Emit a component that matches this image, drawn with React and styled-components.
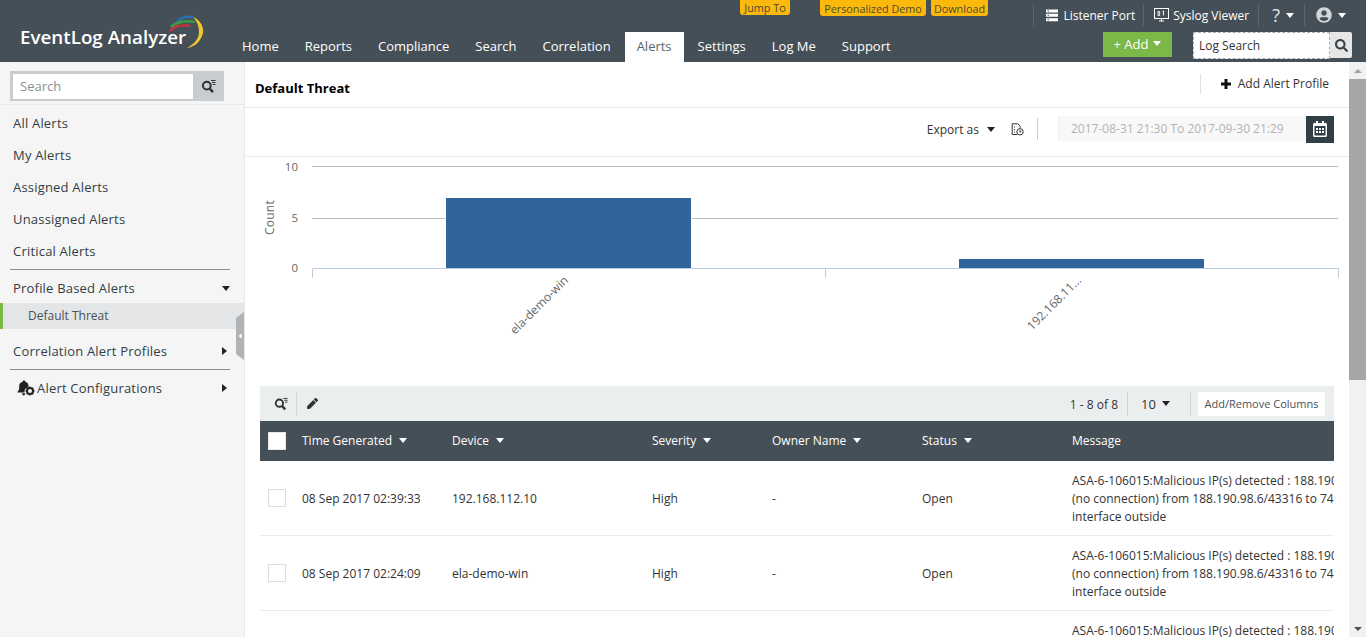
import React from 'react';
import styled, { createGlobalStyle } from 'styled-components';
import { FaSearch, FaPen, FaRegCalendarAlt, FaUserCircle, FaCaretLeft } from 'react-icons/fa';

const GlobalStyle = createGlobalStyle`
  html, body {
    margin: 0;
    height: 100%;
    overflow: hidden;
  }
  body {
    font-family: 'Open Sans', 'Liberation Sans', sans-serif;
    font-size: 12px;
    color: #333;
    background: #fff;
  }
  * {
    box-sizing: border-box;
  }
`;

const Page = styled.div`
  width: 1366px;
  height: 637px;
  display: flex;
  flex-direction: column;
  overflow: hidden;
`;

const Caret = styled.span`
  flex: none;
  width: 0;
  height: 0;
  border-style: solid;
  border-color: transparent;
  ${(p) => p.$right
    ? `margin-right: 3px; border-width: 4.5px 0 4.5px 5px; border-left-color: ${p.$color || 'currentColor'};`
    : `border-width: 5px 4.5px 0 4.5px; border-top-color: ${p.$color || 'currentColor'};`}
`;

const Header = styled.header`
  flex: 0 0 62px;
  display: grid;
  grid-template-columns: 229px 1fr;
  grid-template-rows: 32px 30px;
  background: #454f57;
`;

const Logo = styled.div`
  grid-row: 1 / 3;
  position: relative;
  padding: 24px 0 0 20px;
  color: #fff;
  font-size: 18.8px;
  font-weight: 600;
  line-height: 26px;
  white-space: nowrap;
`;

const LogoArcs = styled.svg`
  position: absolute;
  left: 166px;
  top: 14px;
`;

const TopStrip = styled.div`
  display: flex;
  align-items: flex-start;
  padding-left: 511px;
`;

const Badge = styled.a`
  width: ${(p) => p.$w}px;
  margin-left: ${(p) => p.$gap}px;
  height: ${(p) => p.$short ? 15 : 16}px;
  display: flex;
  align-items: center;
  justify-content: center;
  background: #fdb90b;
  border-radius: 0 0 3px 3px;
  color: #4a4a32;
  font-size: 10.8px;
  white-space: nowrap;
`;

const TopTools = styled.div`
  margin-left: auto;
  height: 24px;
  margin-top: 3px;
  display: flex;
  align-items: center;
  padding-right: 16px;
`;

const TopTool = styled.a`
  height: 22px;
  padding: 0 ${(p) => p.$right}px 0 ${(p) => p.$left}px;
  display: flex;
  align-items: center;
  gap: ${(p) => p.$gap}px;
  border-left: 1px solid #5d666d;
  color: #fff;
  font-size: 12px;
  white-space: nowrap;
`;

const HelpMark = styled.span`
  font-size: 18px;
  line-height: 22px;
  color: #e4e6e7;
`;

const NavRow = styled.div`
  display: flex;
  align-items: stretch;
`;

const NavItem = styled.a`
  padding: 0 ${(p) => p.$active ? 12 : 13}px 2px;
  margin: 0 ${(p) => p.$active ? 1 : 0}px;
  display: flex;
  align-items: center;
  color: ${(p) => p.$active ? '#5c6469' : '#fff'};
  background: ${(p) => p.$active ? '#fff' : 'transparent'};
  font-size: 13px;
  white-space: nowrap;
`;

const NavActions = styled.div`
  margin-left: auto;
  display: flex;
  align-items: flex-start;
  padding-right: 14px;
`;

const AddButton = styled.button`
  width: 69px;
  height: 25px;
  margin-right: 21px;
  padding: 0 0 2px;
  display: flex;
  align-items: center;
  justify-content: center;
  gap: 5px;
  border: none;
  background: #7cb847;
  color: #fff;
  font-family: inherit;
  font-size: 13px;
`;

const LogSearchInput = styled.div`
  width: 137px;
  height: 27px;
  padding-left: 5px;
  display: flex;
  align-items: center;
  background: #fff;
  border: 1px dashed #a9a9a9;
  color: #333;
  font-size: 12px;
`;

const LogSearchButton = styled.button`
  width: 22px;
  height: 26px;
  padding: 0;
  display: flex;
  align-items: center;
  justify-content: center;
  border: none;
  border-radius: 0 2px 2px 0;
  background: #e6e6e6;
  color: #3a4249;
`;

const Body = styled.div`
  flex: 1;
  min-height: 0;
  display: flex;
`;

const Sidebar = styled.aside`
  flex: 0 0 245px;
  position: relative;
  background: #f5f5f5;
  border-right: 1px solid #e6e8e8;
`;

const SideSearchWrap = styled.div`
  height: 43px;
  padding-top: 9px;
  border-bottom: 1px solid #e8eaea;
`;

const SideSearch = styled.div`
  width: 214px;
  height: 30px;
  margin-left: 10px;
  display: flex;
  align-items: center;
  background: #c9cdd0;
`;

const SideSearchField = styled.div`
  width: 180px;
  height: 25px;
  margin-left: 3px;
  padding-left: 7px;
  display: flex;
  align-items: center;
  background: #fff;
  color: #8a8f92;
  font-size: 13px;
`;

const SideSearchIcon = styled.div`
  flex: 1;
  display: flex;
  justify-content: center;
  color: #333;
`;

const SideMenu = styled.nav`
  padding-top: 2px;
`;

const SideItem = styled.a`
  height: 32px;
  padding: 0 14px 0 13px;
  display: flex;
  align-items: center;
  color: #333d45;
  font-size: 13px;
  letter-spacing: 0.2px;
  white-space: nowrap;
`;

const SideSection = styled(SideItem)`
  height: ${(p) => p.$h}px;
  padding-top: ${(p) => p.$top || 0}px;
  padding-bottom: ${(p) => p.$bottom || 0}px;
  justify-content: space-between;
`;

const SideLabel = styled.span`
  display: flex;
  align-items: center;
  gap: 2px;
  padding-left: ${(p) => p.$indent || 0}px;
`;

const SideDivider = styled.div`
  height: 1px;
  margin: ${(p) => p.$top || 0}px 14px 0 10px;
  background: #8c8c8c;
`;

const SideChild = styled.a`
  height: 26px;
  padding: 0 0 2px 25px;
  display: flex;
  align-items: center;
  background: #e3e5e6;
  border-left: 3px solid #7cb847;
  color: #4a5157;
  font-size: 12px;
`;

const Collapser = styled.div`
  position: absolute;
  right: 0;
  top: 250px;
  width: 8px;
  height: 48px;
  display: flex;
  align-items: center;
  justify-content: center;
  background: #aeb3b5;
  color: #fff;
  clip-path: polygon(0 6px, 100% 0, 100% 100%, 0 calc(100% - 6px));
`;

const Main = styled.main`
  flex: 1;
  min-width: 0;
  display: flex;
  flex-direction: column;
  overflow: hidden;
`;

const TitleBar = styled.div`
  flex: 0 0 46px;
  display: flex;
  align-items: center;
  padding: 0 20px 0 10px;
  border-bottom: 1px solid #e8e8e8;
`;

const PageTitle = styled.h1`
  margin: 6px 0 0;
  font-size: 13px;
  font-weight: 700;
  color: #000;
`;

const AddProfile = styled.a`
  margin: 0 0 2px auto;
  height: 20px;
  padding-left: 20px;
  display: flex;
  align-items: center;
  gap: 7px;
  border-left: 1px solid #e2e2e2;
  color: #333;
  font-size: 12px;
`;

const FilterBar = styled.div`
  flex: 0 0 49px;
  display: flex;
  align-items: center;
  justify-content: flex-end;
  padding: 0 15px 6px 0;
  border-bottom: 1px solid #ececec;
`;

const ExportLabel = styled.span`
  display: flex;
  align-items: center;
  gap: 8px;
  color: #333;
  font-size: 12px;
`;

const HistoryIcon = styled.svg`
  margin-left: 16px;
`;

const DateField = styled.div`
  width: 248px;
  height: 25px;
  margin: 0 0 2px 20px;
  padding-left: 12px;
  display: flex;
  align-items: center;
  background: #f8f8f8;
  border-left: 1px solid #f1f1f1;
  color: #b3b3b3;
  font-size: 12px;
`;

const FilterRule = styled.span`
  width: 1px;
  height: 22px;
  margin-left: 13px;
  background: #ccc;
`;

const CalendarButton = styled.button`
  width: 28px;
  height: 27px;
  padding: 0;
  display: flex;
  align-items: center;
  justify-content: center;
  border: none;
  background: #323e46;
  color: #fff;
`;

const ChartWrap = styled.div`
  flex: 0 0 225px;
`;

const TableArea = styled.section`
  padding: 0 15px;
`;

const TableTools = styled.div`
  height: 35px;
  display: flex;
  align-items: center;
  background: #ebeeef;
  color: #333;
`;

const SearchTool = styled.span`
  width: 36px;
  height: 24px;
  padding-right: 8px;
  display: flex;
  align-items: center;
  justify-content: flex-end;
`;

const PenTool = styled.span`
  width: 32px;
  height: 24px;
  display: flex;
  align-items: center;
  justify-content: center;
  border-left: 1px solid #d5d8d9;
`;

const Pager = styled.div`
  margin-left: auto;
  height: 24px;
  display: flex;
  align-items: center;
  padding-right: 9px;
`;

const PageCount = styled.span`
  padding: 2px 9px 0 0;
  font-size: 12px;
  color: #333;
`;

const PageSize = styled.span`
  height: 24px;
  width: 64px;
  padding-left: 13px;
  display: flex;
  align-items: center;
  gap: 6px;
  border-left: 1px solid #d0d3d4;
  border-right: 1px solid #d0d3d4;
  font-size: 13px;
`;

const ColumnsButton = styled.button`
  height: 24px;
  width: 127px;
  margin-left: 7px;
  padding: 0;
  border: none;
  background: #fff;
  color: #4a5157;
  font-family: inherit;
  font-size: 11px;
`;

const Table = styled.div`
  overflow: hidden;
`;

const columns = '42px 150px 200px 120px 150px 150px 262px';

const HeadRow = styled.div`
  height: 40px;
  display: grid;
  grid-template-columns: ${columns};
  align-items: center;
  background: #454f57;
  color: #fff;
  font-size: 12px;
`;

const Row = styled.div`
  height: 75px;
  display: grid;
  grid-template-columns: ${columns};
  align-items: center;
  border-bottom: 1px solid #ececec;
  color: #333;
  font-size: 12px;
`;

const HeadCell = styled.span`
  margin-bottom: 2px;
  display: flex;
  align-items: center;
  gap: 7px;
`;

const CheckBox = styled.span`
  width: 18px;
  height: 18px;
  margin-left: 8px;
  background: #fff;
  border: 1px solid ${(p) => p.$head ? '#e6e6e6' : '#dcdcdc'};
`;

const Message = styled.div`
  padding-top: 2px;
  overflow: hidden;
  line-height: 18px;
  white-space: nowrap;
`;

const Scrollbar = styled.div`
  flex: 0 0 17px;
  display: flex;
  flex-direction: column;
  align-items: stretch;
  background: #f1f1f1;
`;

const ScrollArrow = styled.div`
  height: 17px;
  display: flex;
  align-items: center;
  justify-content: center;
`;

const ScrollUp = styled.span`
  border-style: solid;
  border-width: 0 4px 4px 4px;
  border-color: transparent transparent #a3a3a3 transparent;
`;

const ScrollDown = styled.span`
  border-style: solid;
  border-width: 4px 4px 0 4px;
  border-color: #505050 transparent transparent transparent;
`;

const ScrollThumb = styled.div`
  height: 301px;
  background: #a6a6a6;
`;

const ScrollRest = styled.div`
  flex: 1;
`;

const navItems = ['Home', 'Reports', 'Compliance', 'Search', 'Correlation', 'Alerts', 'Settings', 'Log Me', 'Support'];
const sideLinks = ['All Alerts', 'My Alerts', 'Assigned Alerts', 'Unassigned Alerts', 'Critical Alerts'];
const heads = ['Time Generated', 'Device', 'Severity', 'Owner Name', 'Status'];
const messageLines = [
  'ASA-6-106015:Malicious IP(s) detected : 188.190.98.6',
  '(no connection) from 188.190.98.6/43316 to 74.125.130.188',
  'interface outside',
];
const rows = [
  { time: '08 Sep 2017 02:39:33', device: '192.168.112.10' },
  { time: '08 Sep 2017 02:24:09', device: 'ela-demo-win' },
  { time: '08 Sep 2017 02:09:12', device: 'ela-demo-win' },
];

function FilterSearchIcon({ size = 15 }) {
  return (
    <svg width={size} height={size} viewBox="0 0 15 15" fill="none" stroke="currentColor">
      <circle cx="5.8" cy="6.6" r="3.9" strokeWidth="2" />
      <path d="M8.6 9.6l3.4 3.6" strokeWidth="2.6" />
      <path d="M10 1.5h4.5M11 3.5h3.5M11.6 5.5h2.9" strokeWidth="1" />
    </svg>
  );
}

function PlusIcon() {
  return (
    <svg width="10" height="10" viewBox="0 0 10 10" fill="none" stroke="#111" strokeWidth="3">
      <path d="M5 0v10M0 5h10" />
    </svg>
  );
}

function ListenerIcon() {
  return (
    <svg width="14" height="13" viewBox="0 0 14 13" fill="#fff">
      <path d="M1 0.5h12v3H1zM1 4.8h12v3H1zM1 9.2h12v3H1z" />
      <path d="M2.5 1.5h1.5v1h-1.5zM2.5 5.8h1.5v1h-1.5zM2.5 10.2h1.5v1h-1.5z" fill="#454f57" />
    </svg>
  );
}

function SyslogIcon() {
  return (
    <svg width="15" height="14" viewBox="0 0 15 14" fill="none" stroke="#fff">
      <rect x="0.5" y="0.5" width="14" height="10" />
      <path d="M5 13h5M7.5 10.5V13" />
      <path d="M4 3.5h1.6v4H4zM8.5 3.5l1-0.5v4.5" strokeWidth="0.9" />
    </svg>
  );
}

function ReportTimeIcon() {
  return (
    <HistoryIcon width="13" height="13" viewBox="0 0 13 13" fill="none" stroke="#333">
      <path d="M6 11.5H1.2V0.8h5.6l2.4 2.4v1.6" />
      <path d="M3 4h1M3 6.5h1M3 9h1" />
      <circle cx="9" cy="8.8" r="3.2" />
      <path d="M9 7v2h1.6" />
    </HistoryIcon>
  );
}

function AlertConfigIcon() {
  return (
    <svg width="18" height="16" viewBox="0 0 18 16" fill="#222">
      <path d="M7 0.5c0.8 0 1.3 0.5 1.4 1.2 2 0.6 3.1 2.2 3.1 4.3v1.2a5 5 0 0 0-4 5.3H1c-0.6 0-0.7-0.6-0.3-1 1-1 1.5-2.3 1.5-4V6c0-2.1 1.2-3.7 3.4-4.3C5.7 1 6.2 0.5 7 0.5z" />
      <path d="M5.2 13.2h3c0.1 1.2-0.6 2.3-1.5 2.3s-1.6-1-1.5-2.3z" />
      <circle cx="13" cy="11" r="3" fill="none" stroke="#222" strokeWidth="2" />
      <path d="M13 6.5v1.6M13 13.9v1.6M8.5 11h1.6M15.9 11h1.6M9.8 7.8l1.1 1.1M15.1 13.1l1.1 1.1M16.2 7.8l-1.1 1.1M10.9 13.1l-1.1 1.1" stroke="#222" strokeWidth="1.4" />
    </svg>
  );
}

function AlertChart() {
  return (
    <svg width="1104" height="225" viewBox="0 0 1104 225">
      <g stroke="#bdbdbd">
        <path d="M67 9.5h1026M67 61.5h1026" />
      </g>
      <rect x="200" y="40" width="247" height="71" fill="#fff" />
      <rect x="201" y="41" width="245" height="70" fill="#31649b" />
      <rect x="714" y="102" width="245" height="9" fill="#31649b" />
      <path d="M67.5 111.5h1026M67.5 111.5v9M580.5 111.5v9M1093.5 111.5v9" stroke="#bccddc" fill="none" />
      <g fontFamily="'Open Sans', sans-serif" fontSize="11.5" fill="#666">
        <text x="53" y="14" textAnchor="end">10</text>
        <text x="53" y="65" textAnchor="end">5</text>
        <text x="53" y="115" textAnchor="end">0</text>
        <text transform="translate(29 60.5) rotate(-90)" textAnchor="middle" fontSize="12" letterSpacing="0.2">Count</text>
        <text transform="translate(324 124) rotate(-45)" textAnchor="end" fontSize="12">ela-demo-win</text>
        <text transform="translate(837 124) rotate(-45)" textAnchor="end" fontSize="12">192.168.11...</text>
      </g>
    </svg>
  );
}

export default function App() {
  return (
    <>
      <GlobalStyle />
      <Page>
        <Header>
          <Logo>
            EventLog Analyzer
            <LogoArcs width="40" height="36" viewBox="0 0 40 36" fill="none">
              <path d="M11 8C14 4 20 2 27 3" stroke="#2a6fb0" strokeWidth="2.6" />
              <path d="M5 13C10 8 20 6 29 8" stroke="#3b9b4a" strokeWidth="2.6" />
              <path d="M4 17C9 12 16 10 24 12" stroke="#c4323a" strokeWidth="2.6" />
              <path d="M27 3C35 6 38 14 37 19C35 27 29 33 21 34C28 30 33 25 33 18C33 12 31 7 27 3z" fill="#f0c52d" />
            </LogoArcs>
          </Logo>
          <TopStrip>
            <Badge $short $w={50} $gap={0}>Jump To</Badge>
            <Badge $w={106} $gap={30}>Personalized Demo</Badge>
            <Badge $w={57} $gap={5}>Download</Badge>
            <TopTools>
              <TopTool $left={11} $right={8} $gap={4}>
                <ListenerIcon />
                Listener Port
              </TopTool>
              <TopTool $left={10} $right={9} $gap={4}>
                <SyslogIcon />
                Syslog Viewer
              </TopTool>
              <TopTool $left={13} $right={10} $gap={6}>
                <HelpMark>?</HelpMark>
                <Caret />
              </TopTool>
              <TopTool $left={11} $right={4} $gap={6}>
                <FaUserCircle size={16} color="#d4d7d9" />
                <Caret />
              </TopTool>
            </TopTools>
          </TopStrip>
          <NavRow>
            {navItems.map((item) => (
              <NavItem key={item} $active={item === 'Alerts'}>{item}</NavItem>
            ))}
            <NavActions>
              <AddButton>
                + Add <Caret />
              </AddButton>
              <LogSearchInput>Log Search</LogSearchInput>
              <LogSearchButton><FaSearch size={13} /></LogSearchButton>
            </NavActions>
          </NavRow>
        </Header>
        <Body>
          <Sidebar>
            <SideSearchWrap>
              <SideSearch>
                <SideSearchField>Search</SideSearchField>
                <SideSearchIcon><FilterSearchIcon /></SideSearchIcon>
              </SideSearch>
            </SideSearchWrap>
            <SideMenu>
              {sideLinks.map((link) => (
                <SideItem key={link}>{link}</SideItem>
              ))}
              <SideDivider $top={2} />
              <SideSection $h={33} $top={3}>
                Profile Based Alerts
                <Caret $color="#222" />
              </SideSection>
              <SideChild>Default Threat</SideChild>
              <SideSection $h={40} $top={4}>
                Correlation Alert Profiles
                <Caret $right $color="#222" />
              </SideSection>
              <SideDivider />
              <SideSection $h={37} $bottom={2}>
                <SideLabel $indent={4}>
                  <AlertConfigIcon />
                  Alert Configurations
                </SideLabel>
                <Caret $right $color="#222" />
              </SideSection>
            </SideMenu>
            <Collapser><FaCaretLeft size={8} /></Collapser>
          </Sidebar>
          <Main>
            <TitleBar>
              <PageTitle>Default Threat</PageTitle>
              <AddProfile>
                <PlusIcon />
                Add Alert Profile
              </AddProfile>
            </TitleBar>
            <FilterBar>
              <ExportLabel>
                Export as
                <Caret $color="#222" />
              </ExportLabel>
              <ReportTimeIcon />
              <FilterRule />
              <DateField>2017-08-31 21:30 To 2017-09-30 21:29</DateField>
              <CalendarButton><FaRegCalendarAlt size={16} /></CalendarButton>
            </FilterBar>
            <ChartWrap>
              <AlertChart />
            </ChartWrap>
            <TableArea>
              <TableTools>
                <SearchTool><FilterSearchIcon size={14} /></SearchTool>
                <PenTool><FaPen size={11} /></PenTool>
                <Pager>
                  <PageCount>1 - 8 of 8</PageCount>
                  <PageSize>
                    10 <Caret $color="#222" />
                  </PageSize>
                  <ColumnsButton>Add/Remove Columns</ColumnsButton>
                </Pager>
              </TableTools>
              <Table>
                <HeadRow>
                  <CheckBox $head />
                  {heads.map((head) => (
                    <HeadCell key={head}>
                      {head}
                      <Caret />
                    </HeadCell>
                  ))}
                  <HeadCell>Message</HeadCell>
                </HeadRow>
                {rows.map((row) => (
                  <Row key={row.time}>
                    <CheckBox />
                    <span>{row.time}</span>
                    <span>{row.device}</span>
                    <span>High</span>
                    <span>-</span>
                    <span>Open</span>
                    <Message>
                      {messageLines.map((line) => (
                        <div key={line}>{line}</div>
                      ))}
                    </Message>
                  </Row>
                ))}
              </Table>
            </TableArea>
          </Main>
          <Scrollbar>
            <ScrollArrow><ScrollUp /></ScrollArrow>
            <ScrollThumb />
            <ScrollRest />
            <ScrollArrow><ScrollDown /></ScrollArrow>
          </Scrollbar>
        </Body>
      </Page>
    </>
  );
}
